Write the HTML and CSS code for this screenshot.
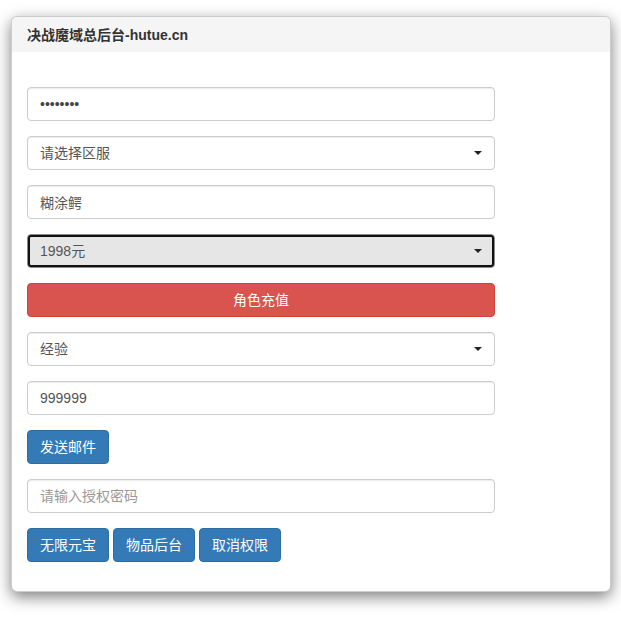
FILE: index.html
```html
<!DOCTYPE html>
<html lang="zh-CN">
<head>
<meta charset="utf-8">
<title>决战魔域总后台-hutue.cn</title>
<link rel="stylesheet" href="styles.css">
</head>
<body>
<div class="panel">
  <div class="panel-heading"><h3 class="panel-title">决战魔域总后台-hutue.cn</h3></div>
  <div class="panel-body">
    <div class="form-group"><input class="form-control" type="password" value="12345678"></div>
    <div class="form-group select-wrap">
      <select class="form-control"><option>请选择区服</option></select>
    </div>
    <div class="form-group"><input class="form-control" type="text" value="糊涂鳄"></div>
    <div class="form-group select-wrap">
      <select class="form-control is-active"><option>1998元</option></select>
    </div>
    <div class="form-group"><button class="btn btn-danger btn-block" type="button">角色充值</button></div>
    <div class="form-group select-wrap">
      <select class="form-control"><option>经验</option></select>
    </div>
    <div class="form-group"><input class="form-control" type="text" value="999999"></div>
    <div class="form-group"><button class="btn btn-primary" type="button">发送邮件</button></div>
    <div class="form-group"><input class="form-control" type="text" placeholder="请输入授权密码"></div>
    <div class="btn-row">
      <button class="btn btn-primary" type="button">无限元宝</button>
      <button class="btn btn-primary" type="button">物品后台</button>
      <button class="btn btn-primary" type="button">取消权限</button>
    </div>
  </div>
</div>
</body>
</html>
```
FILE: styles.css
```css
* { box-sizing: border-box; }
html, body { margin: 0; padding: 0; background: #fff; }
body {
  font-family: "Liberation Sans", "Noto Sans CJK SC", sans-serif;
  font-size: 14px;
  color: #333;
  padding: 16px 0 40px 11px;
}
.panel {
  width: 600px;
  border: 1px solid rgba(0,0,0,.2);
  border-radius: 6px;
  background: #fff;
  box-shadow: 0 5px 15px rgba(0,0,0,.5);
}
.panel-heading {
  height: 35px;
  padding: 0 15px;
  background: #f5f5f5;
  border-radius: 5px 5px 0 0;
  display: flex;
  align-items: center;
}
.panel-title {
  margin: 0;
  font-size: 14px;
  font-weight: bold;
  color: #333;
  line-height: 16px;
}
.panel-body {
  padding: 35px 15px 14px 15px;
}
.form-group { margin-bottom: 15px; width: 468px; }
.form-control {
  display: block;
  width: 468px;
  height: 34px;
  padding: 6px 12px;
  font-family: inherit;
  font-size: 14px;
  line-height: 20px;
  color: #555;
  background: #fff;
  border: 1px solid #ccc;
  border-radius: 4px;
  box-shadow: inset 0 1px 1px rgba(0,0,0,.075);
  outline: none;
}
.form-control::placeholder { color: #999; }
input[type="password"].form-control { color: #444; }
select.form-control {
  -webkit-appearance: none;
  appearance: none;
  padding-right: 30px;
}
select.form-control.is-active {
  background: #e6e6e6;
  border-color: #8a8a8a;
  outline: 2px solid #111;
  outline-offset: -3px;
}
.select-wrap { position: relative; }
.select-wrap::after {
  content: "";
  position: absolute;
  right: 13px;
  top: 15px;
  width: 0;
  height: 0;
  border-left: 4px solid transparent;
  border-right: 4px solid transparent;
  border-top: 4px solid #222;
  pointer-events: none;
}
.btn {
  display: inline-block;
  height: 34px;
  padding: 6px 12px;
  font-family: inherit;
  font-size: 14px;
  line-height: 20px;
  border: 1px solid transparent;
  border-radius: 4px;
  color: #fff;
  cursor: pointer;
  white-space: nowrap;
}
.btn-block { display: block; width: 100%; text-align: center; }
.btn-danger { background: #d9534f; border-color: #d43f3a; }
.btn-primary { background: #337ab7; border-color: #2e6da4; }
.btn-row { display: flex; gap: 4px; margin-bottom: 15px; }
```
